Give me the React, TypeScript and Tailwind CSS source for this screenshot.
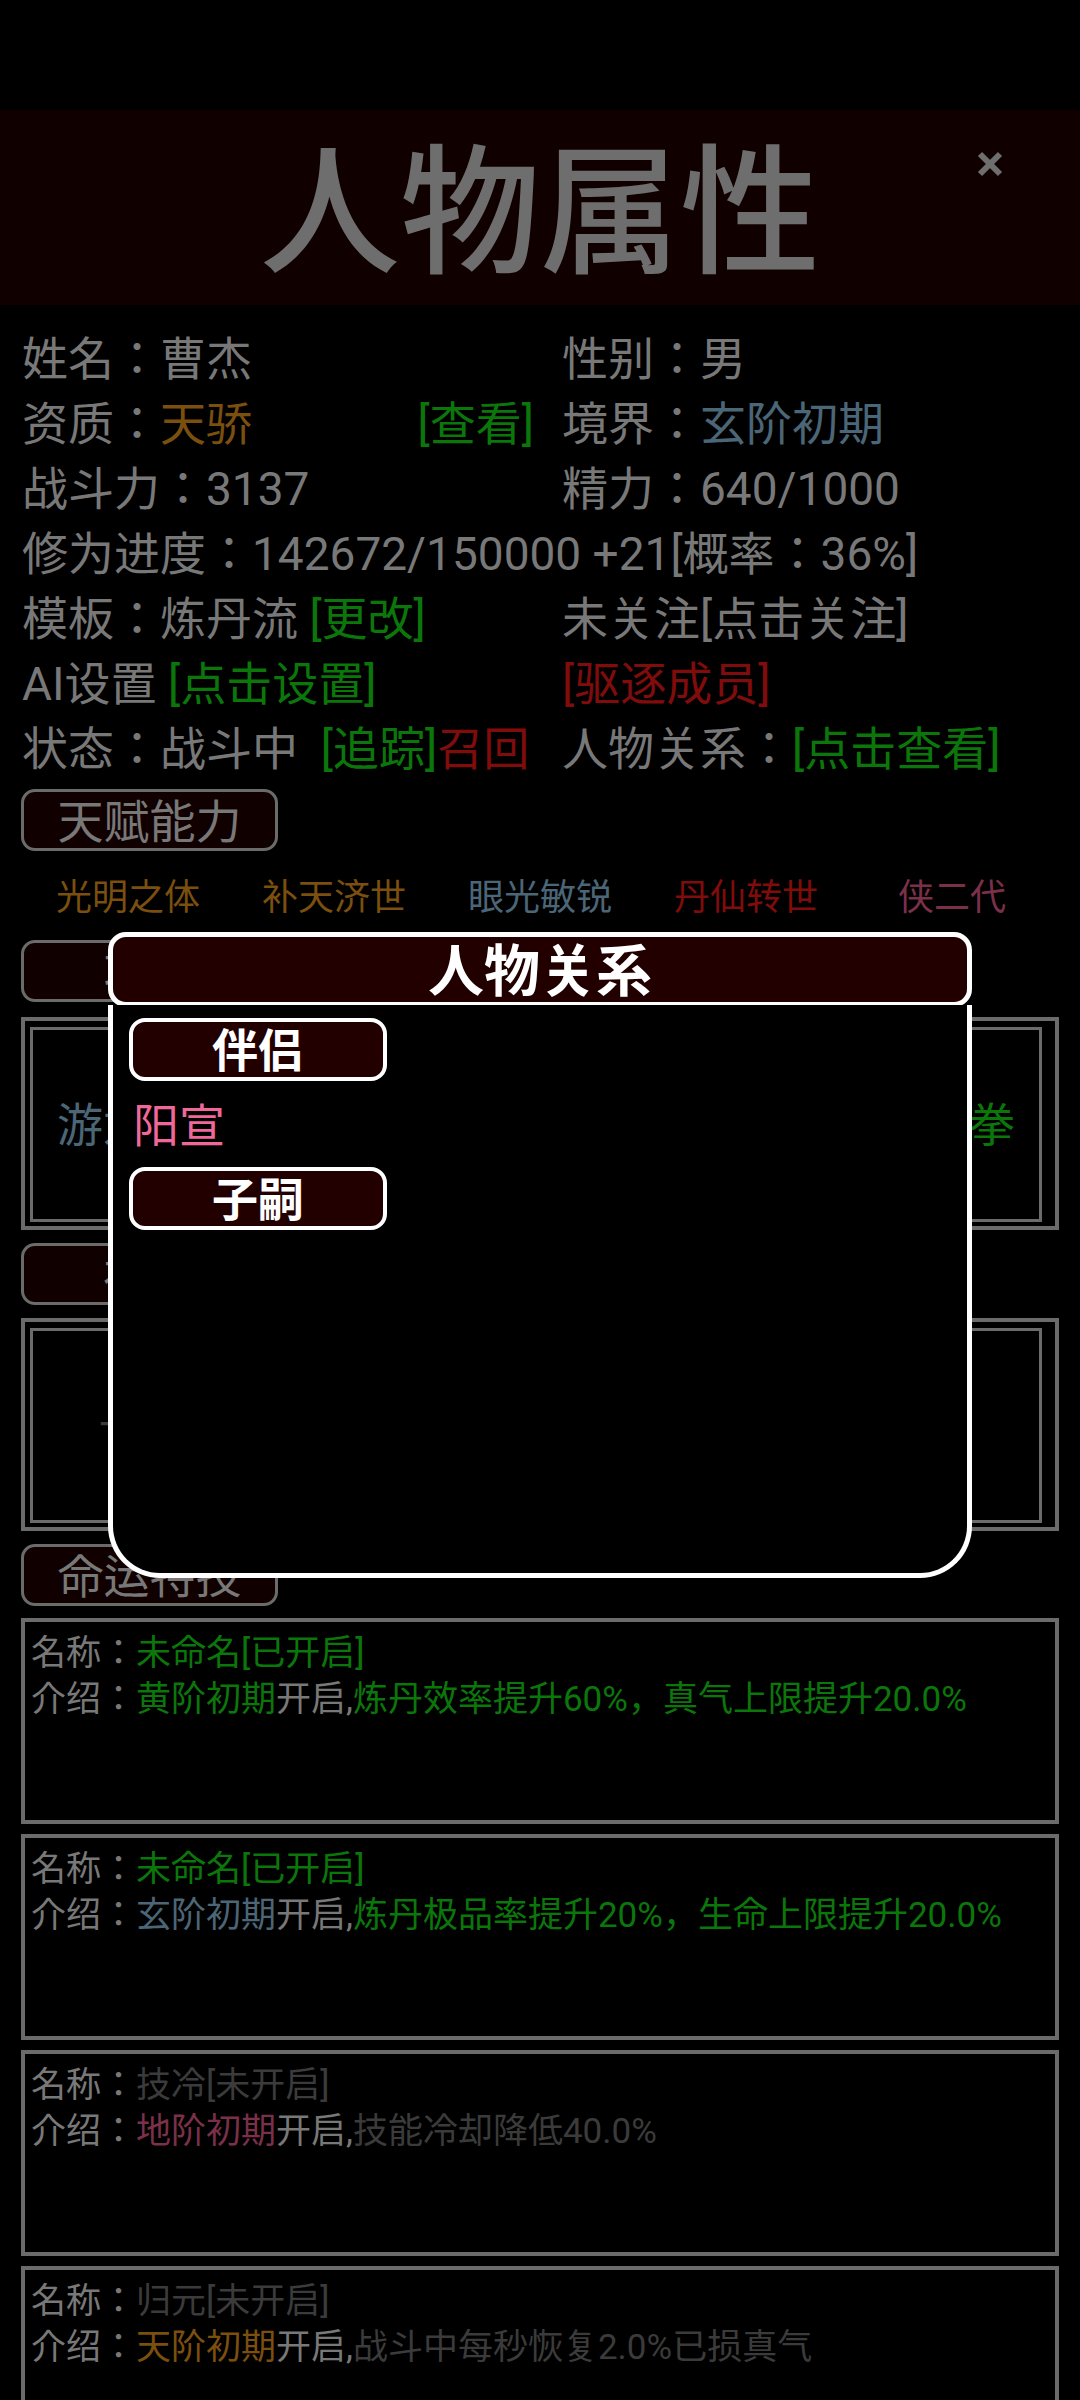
import React from "react";

// dimmed palette of the page behind the dialog
const gray = "text-[#787878]";
const gold = "text-[#7b4f0d]";
const green = "text-[#0b770b]";
const blue = "text-[#4b6677]";
const red = "text-[#800c0c]";
const rose = "text-[#7a3048]";
const dim = "text-[#3b3b3b]";

type Piece = [string, string];

const talents: Piece[] = [
  ["光明之体", gold],
  ["补天济世", gold],
  ["眼光敏锐", blue],
  ["丹仙转世", red],
  ["侠二代", rose],
];

type Fate = { name: Piece[]; intro: Piece[] };

const fates: Fate[] = [
  {
    name: [["未命名[已开启]", green]],
    intro: [
      ["黄阶初期", green],
      ["开启,", gray],
      ["炼丹效率提升60%，真气上限提升20.0%", green],
    ],
  },
  {
    name: [["未命名[已开启]", green]],
    intro: [
      ["玄阶初期", blue],
      ["开启,", gray],
      ["炼丹极品率提升20%，生命上限提升20.0%", green],
    ],
  },
  {
    name: [["技冷[未开启]", dim]],
    intro: [
      ["地阶初期", rose],
      ["开启,", gray],
      ["技能冷却降低40.0%", dim],
    ],
  },
  {
    name: [["归元[未开启]", dim]],
    intro: [
      ["天阶初期", gold],
      ["开启,", gray],
      ["战斗中每秒恢复2.0%已损真气", dim],
    ],
  },
];

function Label({ text }: { text: string }) {
  return (
    <div className="flex h-[62px] w-[257px] items-center justify-center rounded-[14px] border-[3px] border-[#6b6b6b] bg-[#100000] pt-[3px] text-[46px] leading-none text-[#787878]">
      {text}
    </div>
  );
}

function Frame({ children }: { children: React.ReactNode }) {
  return (
    <div className="border-[4px] border-[#6b6b6b] pt-[6px] pl-[5px] pr-[13px] pb-[4px]">
      <div className="flex h-[195px] items-center border-[3px] border-[#6b6b6b]">{children}</div>
    </div>
  );
}

function Line({ pieces }: { pieces: Piece[] }) {
  return (
    <>
      {pieces.map(([t, c], i) => (
        <span key={i} className={c}>
          {t}
        </span>
      ))}
    </>
  );
}

function RelationButton({ text }: { text: string }) {
  return (
    <div className="flex h-[63px] w-[258px] items-center justify-center rounded-[16px] border-[4px] border-white bg-[#220000] pt-[3px] text-[46px] leading-none font-bold text-white">
      {text}
    </div>
  );
}

export default function App() {
  return (
    <div className="relative h-[2400px] w-[1080px] overflow-hidden bg-black font-['Roboto','Noto_Sans_CJK_JP',sans-serif]">
      <div className="h-[110px]" />

      <header className="relative flex h-[195px] items-center justify-center bg-[#100000] pt-[12px]">
        <h1 className="text-[140px] leading-none font-medium text-[#6e6e6e]">人物属性</h1>
        <button className="absolute top-[40px] right-[76px] flex h-[28px] w-[28px] items-center justify-center">
          <svg viewBox="0 0 28 28" className="h-[28px] w-[28px]">
            <path d="M4 4 L24 24 M24 4 L4 24" stroke="#6e6e6e" strokeWidth="6" />
          </svg>
        </button>
      </header>

      <section className="mt-[22px] grid grid-cols-[540px_1fr] px-[22px] text-[46px] leading-[65px] whitespace-pre text-[#787878]">
        <div>姓名：曹杰</div>
        <div>性别：男</div>

        <div className="flex justify-between pr-[28px]">
          <span>
            资质：<span className={gold}>天骄</span>
          </span>
          <span className={green}>[查看]</span>
        </div>
        <div>
          境界：<span className={blue}>玄阶初期</span>
        </div>

        <div>战斗力：3137</div>
        <div>精力：640/1000</div>

        <div className="col-span-2">修为进度：142672/150000 +21[概率：36%]</div>

        <div>
          模板：炼丹流 <span className={green}>[更改]</span>
        </div>
        <div>未关注[点击关注]</div>

        <div>
          AI设置 <span className={green}>[点击设置]</span>
        </div>
        <div className={red}>[驱逐成员]</div>

        <div>
          状态：战斗中  <span className={green}>[追踪]</span>
          <span className={red}>召回</span>
        </div>
        <div>
          人物关系：<span className={green}>[点击查看]</span>
        </div>
      </section>

      <section className="mt-[7px] px-[21px]">
        <Label text="天赋能力" />
        <div className="grid h-[89px] grid-cols-5 items-center px-[4px] pt-[5px] text-center text-[36px] leading-none">
          {talents.map(([t, c]) => (
            <span key={t} className={c}>
              {t}
            </span>
          ))}
        </div>

        <Label text="功法" />
        <div className="mt-[15px]">
          <Frame>
            <div className="flex w-full justify-between pl-[24px] pr-[24px] text-[46px] leading-none">
              <span className={blue}>游龙步</span>
              <span className={green}>罗汉拳</span>
            </div>
          </Frame>
        </div>

        <div className="mt-[13px]">
          <Label text="神通" />
        </div>
        <div className="mt-[13px]">
          <Frame>
            <div className="pl-[66px] text-[40px] leading-none text-[#3b3b3b]">一无所有</div>
          </Frame>
        </div>

        <div className="mt-[13px]">
          <Label text="命运特技" />
        </div>

        <div className="mt-[12px] flex flex-col gap-[10px]">
          {fates.map((f, i) => (
            <div
              key={i}
              className="h-[206px] border-[4px] border-[#6b6b6b] pt-[9px] pl-[6px] text-[35px] leading-[46px] text-[#787878]"
            >
              <div>
                名称：<Line pieces={f.name} />
              </div>
              <div>
                介绍：<Line pieces={f.intro} />
              </div>
            </div>
          ))}
        </div>
      </section>

      <div className="absolute top-[932px] left-[108px] flex h-[646px] w-[864px] flex-col">
        <div className="flex h-[75px] shrink-0 items-center justify-center rounded-[18px] border-[5px] border-white bg-[#220000] pt-[4px] text-[56px] leading-none font-bold text-white">
          人物关系
        </div>
        <div className="-mt-[2px] flex flex-1 flex-col rounded-b-[52px] border-x-[5px] border-b-[5px] border-white bg-black pt-[13px] pl-[16px]">
          <RelationButton text="伴侣" />
          <div className="flex h-[86px] items-center pt-[3px] pl-[4px] text-[46px] leading-none text-[#f0689a]">阳宣</div>
          <RelationButton text="子嗣" />
        </div>
      </div>
    </div>
  );
}
